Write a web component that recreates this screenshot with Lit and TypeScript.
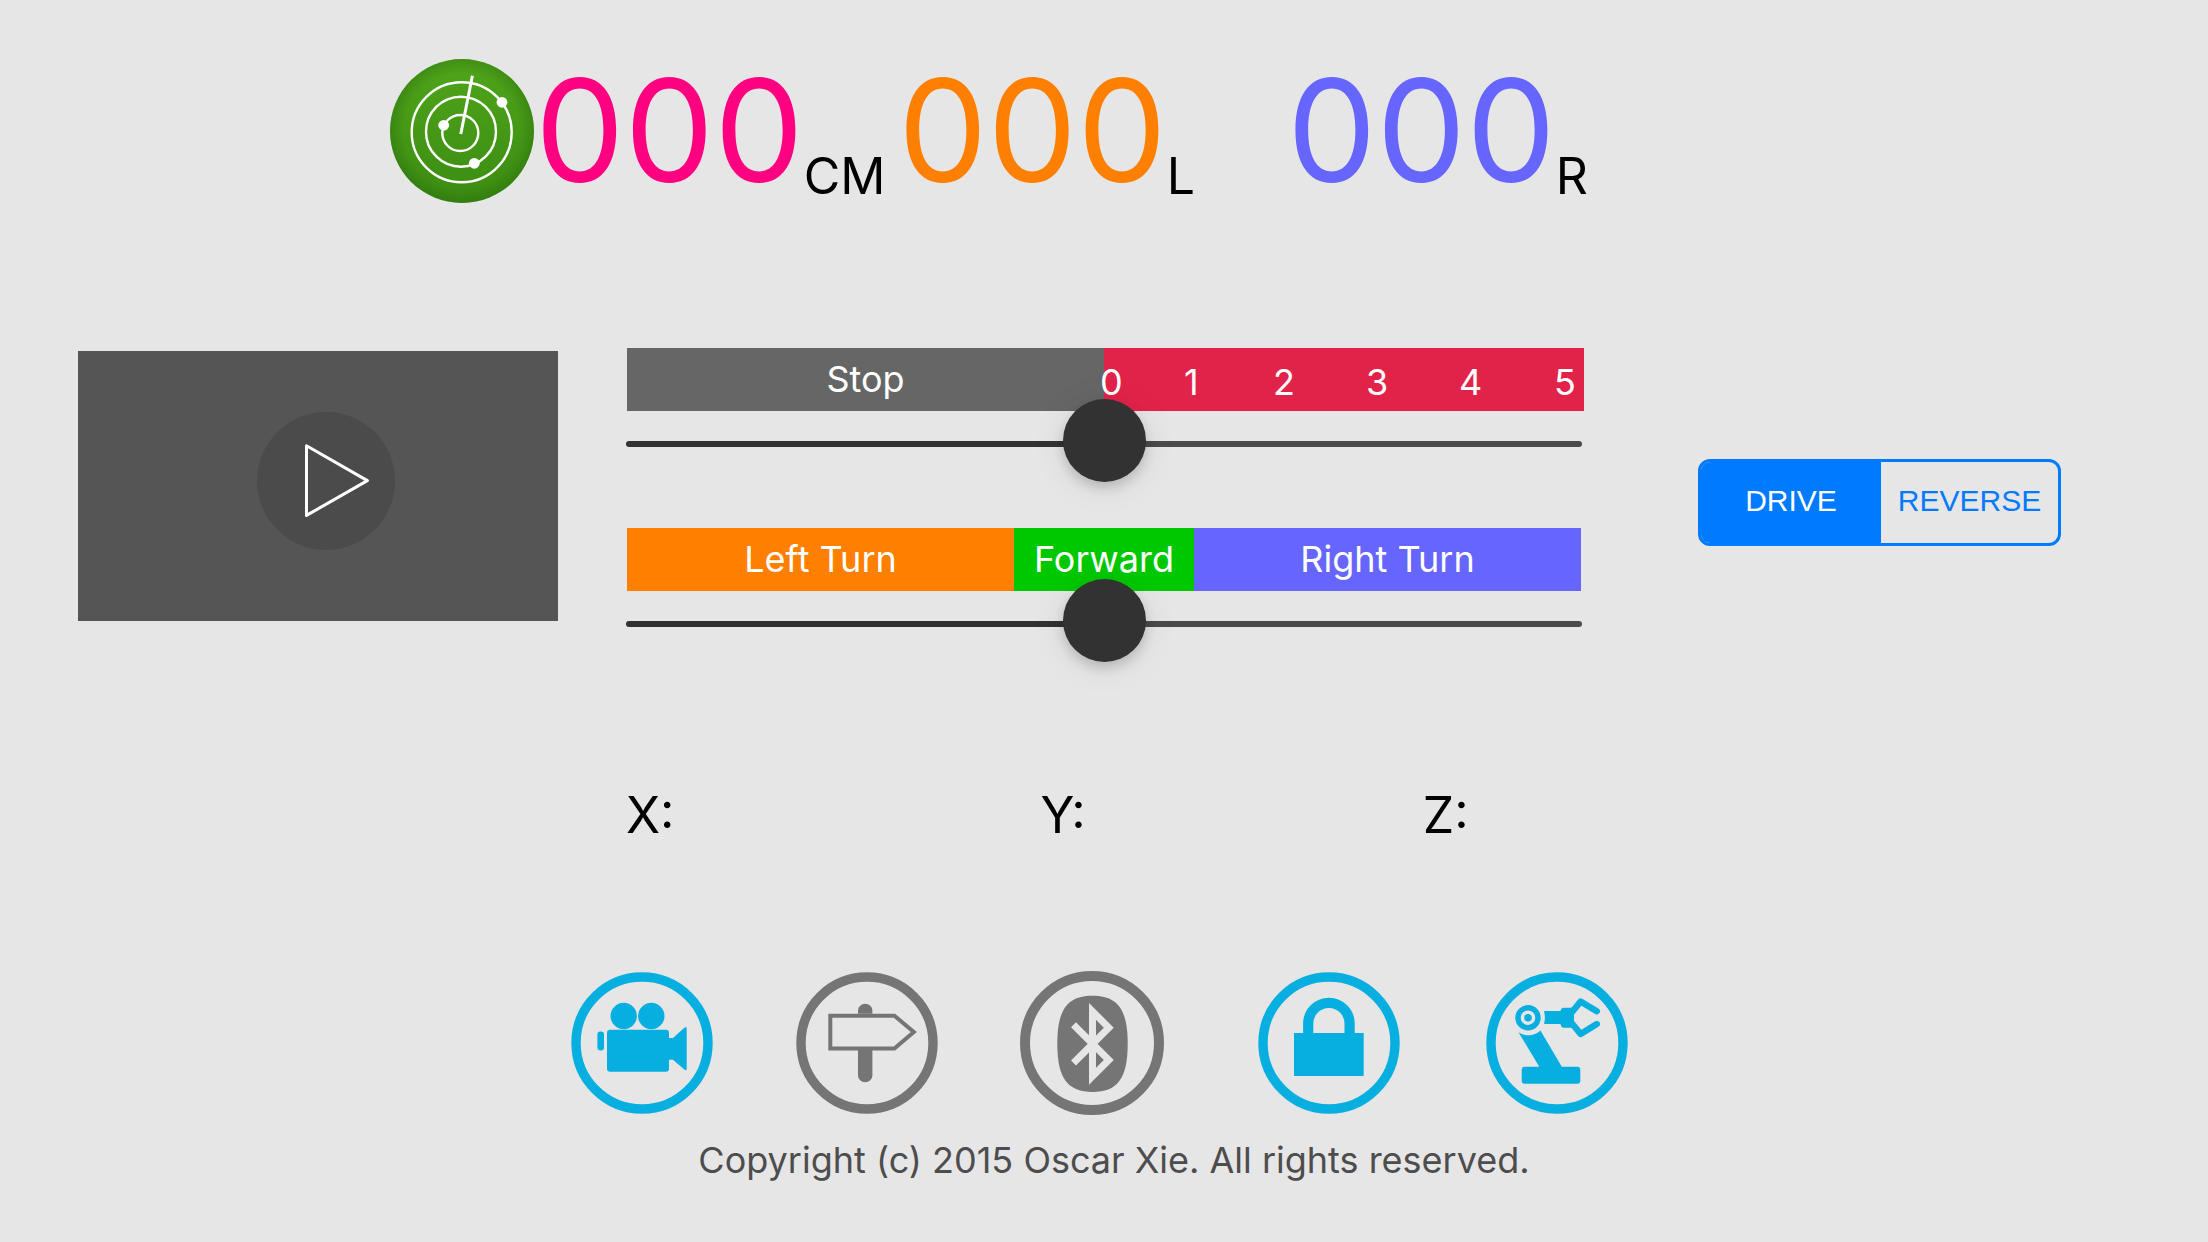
import { LitElement, html, css, svg } from "lit";
import { customElement, property, state } from "lit/decorators.js";
import { classMap } from "lit/directives/class-map.js";
import { styleMap } from "lit/directives/style-map.js";

const radarIcon = svg`
  <defs>
    <linearGradient id="field" x1="0" y1="0" x2="0" y2="1">
      <stop offset="0" stop-color="#4fa51a"></stop>
      <stop offset="1" stop-color="#3b8c12"></stop>
    </linearGradient>
    <radialGradient id="edge">
      <stop offset="0.8" stop-color="#1d5a08" stop-opacity="0"></stop>
      <stop offset="1" stop-color="#1d5a08" stop-opacity="0.3"></stop>
    </radialGradient>
  </defs>
  <circle cx="72" cy="72" r="72" fill="url(#field)"></circle>
  <circle cx="72" cy="72" r="72" fill="url(#edge)"></circle>
  <g fill="none" stroke="#fff" stroke-width="2.4">
    <circle cx="71.7" cy="73.3" r="50"></circle>
    <circle cx="71" cy="72.7" r="35"></circle>
    <circle cx="70.3" cy="74" r="18"></circle>
    <path d="M70.8 75 82.4 16.7" stroke-width="3"></path>
  </g>
  <g fill="#fff">
    <circle cx="112" cy="43.3" r="5.4"></circle>
    <circle cx="53.7" cy="66.3" r="5.4"></circle>
    <circle cx="84.3" cy="104.3" r="5.4"></circle>
  </g>`;

const ring = svg`<circle cx="72" cy="72" r="66" fill="none" stroke="currentColor" stroke-width="9.4"></circle>`;

const cameraIcon = svg`${ring}
  <g fill="currentColor">
    <circle cx="53.7" cy="45" r="13.2"></circle>
    <circle cx="81.3" cy="45" r="13.2"></circle>
    <rect x="37" y="58.7" width="62" height="42" rx="3.2"></rect>
    <rect x="27.4" y="60.6" width="6.6" height="18.8" rx="3"></rect>
    <path d="M98 67h5l11.6-10.4q2.1-1.2 2.1 1v40.2q0 2.2-2.1 1L103 88.7h-5z"></path>
  </g>`;

const signpostIcon = svg`${ring}
  <path d="M63 42.7V39.5a7.2 6.8 0 0 1 14.4 0v3.2zM63 79h14.4v25.5a7.2 6.8 0 0 1-14.4 0z" fill="currentColor"></path>
  <path d="M35.3 44.7H99.4L118.8 61 99.4 77.6H35.3z" fill="none" stroke="currentColor" stroke-width="4"></path>`;

const bluetoothIcon = svg`
  <circle cx="72" cy="72" r="67" fill="none" stroke="currentColor" stroke-width="10"></circle>
  <path d="M72.5 24.7C97 24.7 107.7 37.5 107.7 72.8S97 121 72.5 121 37.3 108 37.3 72.8 48 24.7 72.5 24.7z" fill="currentColor"></path>
  <path d="M53.5 53.7 88.8 89 72.5 105.3V40.4L88.8 56.7 53.5 92" fill="none" stroke="#e6e6e6" stroke-width="7"></path>`;

const lockIcon = svg`${ring}
  <rect x="37" y="62" width="69.7" height="43" fill="currentColor"></rect>
  <path d="M51.2 64V52.6a20.7 20.7 0 0 1 41.4 0V64" fill="none" stroke="currentColor" stroke-width="10.2"></path>`;

const robotArmIcon = svg`${ring}
  <circle cx="43" cy="46.7" r="10" fill="none" stroke="currentColor" stroke-width="5.4"></circle>
  <g fill="currentColor">
    <circle cx="43" cy="46.7" r="3.8"></circle>
    <path d="M33.5 61.2A17.5 17.5 0 0 0 55.4 59.5L77 96H54.4z"></path>
    <rect x="36.7" y="95.7" width="58.6" height="17" rx="3"></rect>
    <path d="M59 40h16.5q.6-3.3 3.5-3.3h9l1 7v6l-1 7H79q-3 0-3.5-3.7H59q1.8-6.5 0-13z"></path>
  </g>
  <path d="M86 42.3 95.6 30.6 111.8 40.2M86 51.3 95.6 63 111.8 53" fill="none" stroke="currentColor" stroke-width="6.4" stroke-linecap="round" stroke-linejoin="round"></path>`;

@customElement("sensor-readout")
class SensorReadout extends LitElement {
  @property() value = "000";
  @property() unit = "";
  @property() tone = "";

  static styles = css`
    :host { display: block; }
    .readout { display: flex; align-items: flex-end; height: 142px; }
    .value { font-size: 142px; line-height: 142px; }
    .unit { font-size: 50px; line-height: 50px; color: #000; }
    .front { color: #ff0080; }
    .left { color: #ff8000; }
    .right { color: #6666ff; }
  `;

  render() {
    return html`<div class="readout">
      <span class=${classMap({ value: true, [this.tone]: true })}>${this.value}</span>
      <span class="unit">${this.unit}</span>
    </div>`;
  }
}

@customElement("control-slider")
class ControlSlider extends LitElement {
  @property() label = "";
  @state() private amount = 50;

  static styles = css`
    :host { display: block; }
    .slider {
      appearance: none;
      display: block;
      width: 100%;
      height: 6px;
      margin: 0;
      border-radius: 3px;
      background: linear-gradient(to right, #323232 var(--fill), #4b4b4b var(--fill));
    }
    .slider::-webkit-slider-runnable-track { height: 6px; }
    .slider::-webkit-slider-thumb {
      appearance: none;
      width: 83px;
      height: 83px;
      margin-top: -42px;
      border: 0;
      border-radius: 50%;
      background: #323232;
      box-shadow: 0 6px 12px rgba(0, 0, 0, 0.16), 0 4px 36px rgba(0, 0, 0, 0.08);
    }
  `;

  render() {
    return html`<input class="slider" type="range" min="0" max="100"
      aria-label=${this.label} .value=${String(this.amount)}
      style=${styleMap({ "--fill": `${this.amount}%` })}
      @input=${(e: Event) => { this.amount = Number((e.target as HTMLInputElement).value); }}>`;
  }
}

@customElement("app-root")
class AppRoot extends LitElement {
  @state() private gear = "DRIVE";

  static styles = css`
    :host {
      display: block;
      min-height: 100vh;
      background: #e6e6e6;
      color: #000;
      font-family: Inter, "Liberation Sans", sans-serif;
    }
    * { box-sizing: border-box; }
    button { margin: 0; padding: 0; border: 0; background: none; font: inherit; cursor: pointer; }
    svg { display: block; }

    .page { display: flex; flex-direction: column; padding-top: 59px; }
    .readouts {
      display: grid;
      grid-template-columns: 144px 364px 389px 300px;
      justify-content: center;
      padding-right: 231px;
    }
    .icon { width: 144px; height: 144px; }
    .first { padding-left: 1px; }

    .controls {
      display: grid;
      grid-template-columns: 480px 1fr 363px;
      align-items: start;
      margin-top: 145px;
      padding: 0 147px 0 78px;
    }
    .video { width: 480px; height: 270px; margin-top: 3px; background: #555; }
    .sliders { margin: 0 114px 0 69px; }
    .channel + .channel { margin-top: 81px; }
    .track { margin: 0 2px 0 -1px; }
    .bar { display: flex; margin-bottom: 30px; height: 63px; font-size: 36px; line-height: 63px; color: #fff; text-align: center; }
    .steering { margin-right: 3px; }
    .stop { flex: 477; background: #666; }
    .speed { flex: 480; background: #e22349; }
    .marks {
      display: grid;
      grid-template-columns: 84fr 89fr 93fr 93fr 95fr 30fr;
      margin: 0 0 0 -4px;
      padding: 0;
      list-style: none;
      line-height: 69px;
      text-align: left;
    }
    .turn { flex: 387; }
    .turn-left { background: #ff8000; }
    .forward { flex: 180; background: #00c800; }
    .turn-right { background: #6666ff; }

    .gears {
      display: grid;
      grid-template-columns: 180fr 177fr;
      height: 87px;
      margin-top: 111px;
      border: 3px solid #007aff;
      border-radius: 12px;
      overflow: hidden;
      font-family: "Liberation Sans", Arial, sans-serif;
      font-size: 30px;
    }
    .gear { padding-bottom: 4px; color: #007aff; }
    .gear.active { background: #007aff; color: #fff; }

    .axes {
      display: grid;
      grid-template-columns: 414fr 382fr 161fr;
      margin: 158px 624px 0 626px;
      font-size: 50px;
      line-height: 60px;
    }
    .actions {
      display: grid;
      grid-template-columns: 225px 225px 237px 228px 144px;
      justify-content: center;
      margin-top: 126px;
      padding-right: 9px;
    }
    .action { width: 144px; height: 144px; border-radius: 50%; color: #06afdf; }
    .action.off { color: #757575; }
    .copyright {
      margin-top: 21px;
      padding-left: 20px;
      font-size: 36px;
      line-height: 48px;
      text-align: center;
      color: #4d4d4d;
    }
  `;

  private action(name: string, art: unknown, off = false) {
    return html`<button class=${classMap({ action: true, off })} aria-label=${name}>
      <svg class="icon" viewBox="0 0 144 144" aria-hidden="true">${art}</svg>
    </button>`;
  }

  render() {
    return html`<main class="page">
      <header class="readouts">
        <svg class="icon" viewBox="0 0 144 144" aria-hidden="true">${radarIcon}</svg>
        <sensor-readout class="first" tone="front" unit="CM"></sensor-readout>
        <sensor-readout tone="left" unit="L"></sensor-readout>
        <sensor-readout tone="right" unit="R"></sensor-readout>
      </header>

      <section class="controls">
        <button class="video" aria-label="Play video">
          <svg viewBox="0 0 480 270" aria-hidden="true">
            <circle cx="248" cy="130" r="69" fill="#4b4b4b"></circle>
            <path d="M228.5 94.8V164.4L289.4 129.6z" fill="none" stroke="#fff" stroke-width="3" stroke-linejoin="round"></path>
          </svg>
        </button>
        <div class="sliders">
          <div class="channel">
            <div class="bar">
              <div class="stop">Stop</div>
              <div class="speed">
                <ul class="marks">${[0, 1, 2, 3, 4, 5].map((n) => html`<li>${n}</li>`)}</ul>
              </div>
            </div>
            <control-slider class="track" label="Speed"></control-slider>
          </div>
          <div class="channel">
            <div class="bar steering">
              <div class="turn turn-left">Left Turn</div>
              <div class="forward">Forward</div>
              <div class="turn turn-right">Right Turn</div>
            </div>
            <control-slider class="track" label="Steering"></control-slider>
          </div>
        </div>
        <div class="gears" role="group" aria-label="Gear">
          ${["DRIVE", "REVERSE"].map((g) => html`<button
            class=${classMap({ gear: true, active: this.gear === g })}
            aria-pressed=${this.gear === g ? "true" : "false"}
            @click=${() => { this.gear = g; }}>${g}</button>`)}
        </div>
      </section>

      <section class="axes"><span>X:</span><span>Y:</span><span>Z:</span></section>

      <nav class="actions">
        ${this.action("Camera", cameraIcon)}
        ${this.action("Directions", signpostIcon, true)}
        ${this.action("Bluetooth", bluetoothIcon, true)}
        ${this.action("Lock", lockIcon)}
        ${this.action("Robot arm", robotArmIcon)}
      </nav>
      <footer class="copyright">Copyright (c) 2015 Oscar Xie. All rights reserved.</footer>
    </main>`;
  }
}
